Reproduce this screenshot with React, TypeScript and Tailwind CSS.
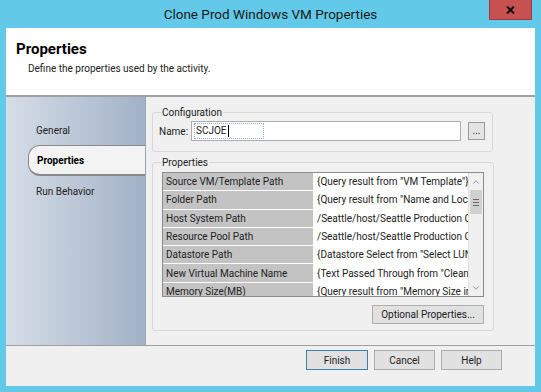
import { ChevronUp, ChevronDown } from "lucide-react";

const rows = [
  ["Source VM/Template Path", "{Query result from \"VM Template\"}"],
  ["Folder Path", "{Query result from \"Name and Location\"}"],
  ["Host System Path", "/Seattle/host/Seattle Production Cluster"],
  ["Resource Pool Path", "/Seattle/host/Seattle Production Cluster"],
  ["Datastore Path", "{Datastore Select from \"Select LUN\"}"],
  ["New Virtual Machine Name", "{Text Passed Through from \"Clean String\"}"],
  ["Memory Size(MB)", "{Query result from \"Memory Size in MB\"}"],
];

export default function App() {
  return (
    <div
      className="w-[541px] h-[392px] bg-[#63c9e8] flex flex-col px-[6px] pb-[6px] text-[10px] text-[#1e1e1e]"
      style={{ fontFamily: "Roboto, 'Liberation Sans', sans-serif" }}
    >
      {/* Title bar */}
      <div className="h-[28px] shrink-0 flex items-center relative">
        <div className="w-full text-center text-[13.5px] text-[#1a1a1a] pt-[1px]">
          Clone Prod Windows VM Properties
        </div>
        <div className="absolute right-[3px] top-0 w-[43px] h-[20px] bg-[#c75050] border border-[#a33a3a] border-t-0 flex items-center justify-center">
          <svg width="9" height="8" viewBox="0 0 9 8">
            <path d="M1 0.5 L8 7.5 M8 0.5 L1 7.5" stroke="#111" strokeWidth="2" />
          </svg>
        </div>
      </div>

      <div className="flex-1 flex flex-col bg-[#f0f0f0] min-h-0">
        {/* Header */}
        <div className="h-[69px] shrink-0 bg-white border-b-2 border-[#a0a0a0] pl-[10px] pt-[11px]">
          <div className="text-[15px] font-bold text-black leading-[20px]">Properties</div>
          <div className="pl-[12px] mt-[2px] text-[#222]">Define the properties used by the activity.</div>
        </div>

        {/* Middle */}
        <div className="flex-1 flex min-h-0 border-b border-[#a0a0a0]">
          <div className="w-[140px] shrink-0 bg-gradient-to-r from-[#d6dee7] to-[#a2b2c7] border-r border-[#9aa4b0] pt-[26px]">
            <div className="pl-[30px] h-[20px] text-[#222]">General</div>
            <div className="ml-[22px] h-[31px] bg-[#f3f3f3] rounded-l-[12px] border-l border-y border-[#8a8a8a] border-b-2 flex items-center pl-[8px] font-bold text-black mt-[2px]">
              Properties
            </div>
            <div className="pl-[30px] pt-[8px] text-[#222]">Run Behavior</div>
          </div>

          <div className="flex-1 pl-[6px] pt-[8px] flex flex-col">
            <fieldset className="w-[341px] h-[47px] border border-[#d8d8d8] rounded-[3px] px-[6px] pt-[1px]">
              <legend className="px-[1px] ml-[2px] text-[#222]">Configuration</legend>
              <div className="flex items-center">
                <span className="w-[32px] shrink-0 whitespace-nowrap text-[#222]">Name:</span>
                <div className="w-[270px] h-[20px] bg-white border border-[#adadad] flex items-center pl-[2px]">
                  <span className="border border-dotted border-[#8ab8e0] pl-[1px] pr-[34px] leading-[14px] flex items-center">
                    SCJOE<span className="w-px h-[12px] bg-black ml-px" />
                  </span>
                </div>
                <div className="ml-[7px] w-[17px] h-[18px] border border-[#9a9a9a] bg-[#e4e4e4] flex items-end justify-center pb-[3px] text-[10px] leading-none">
                  ...
                </div>
              </div>
            </fieldset>

            <fieldset className="w-[341px] h-[176px] border border-[#d8d8d8] rounded-[3px] px-[9px] mt-[3px]">
              <legend className="px-[1px] ml-[-1px] text-[#222]">Properties</legend>
              <div className="w-[322px] h-[125px] border border-[#8c8c8c] bg-white flex mt-[2px] overflow-hidden">
                <div className="flex-1 overflow-hidden">
                  {rows.map(([k, v]) => (
                    <div key={k} className="flex h-[18.3px] border-b border-white">
                      <div className="w-[152px] shrink-0 bg-[#c3c3c3] pl-[3px] border-r-2 border-white flex items-center whitespace-nowrap overflow-hidden text-[#222]">
                        {k}
                      </div>
                      <div className="flex-1 pl-[2px] flex items-center whitespace-nowrap overflow-hidden text-[#222]">{v}</div>
                    </div>
                  ))}
                </div>
                <div className="w-[15px] shrink-0 bg-[#f0f0f0] border-l border-[#e0e0e0] flex flex-col">
                  <div className="h-[17px] flex items-center justify-center text-[#606060]">
                    <ChevronUp size={10} strokeWidth={1.5} />
                  </div>
                  <div className="h-[24px] mx-[1px] bg-[#d0d0d0] flex flex-col items-center justify-center gap-[2px]">
                    <div className="w-[6px] h-px bg-[#666]" />
                    <div className="w-[6px] h-px bg-[#666]" />
                    <div className="w-[6px] h-px bg-[#666]" />
                  </div>
                  <div className="flex-1" />
                  <div className="h-[17px] flex items-center justify-center text-[#606060]">
                    <ChevronDown size={10} strokeWidth={1.5} />
                  </div>
                </div>
              </div>
              <div className="flex justify-end mt-[8px]">
                <div className="w-[112px] h-[19px] border border-[#adadad] bg-[#e1e1e1] flex items-center justify-center text-[#222]">
                  Optional Properties...
                </div>
              </div>
            </fieldset>
          </div>
        </div>

        {/* Footer */}
        <div className="h-[40px] shrink-0 flex justify-end items-start pt-[4px] pr-[33px] gap-[6px]">
          <div className="w-[62px] h-[20px] border border-[#3c7fb1] bg-[#e1e1e1] flex items-center justify-center text-[#222]">Finish</div>
          <div className="w-[61px] h-[20px] border border-[#adadad] bg-[#e1e1e1] flex items-center justify-center text-[#222]">Cancel</div>
          <div className="w-[61px] h-[20px] border border-[#adadad] bg-[#e1e1e1] flex items-center justify-center text-[#222]">Help</div>
        </div>
      </div>
    </div>
  );
}
